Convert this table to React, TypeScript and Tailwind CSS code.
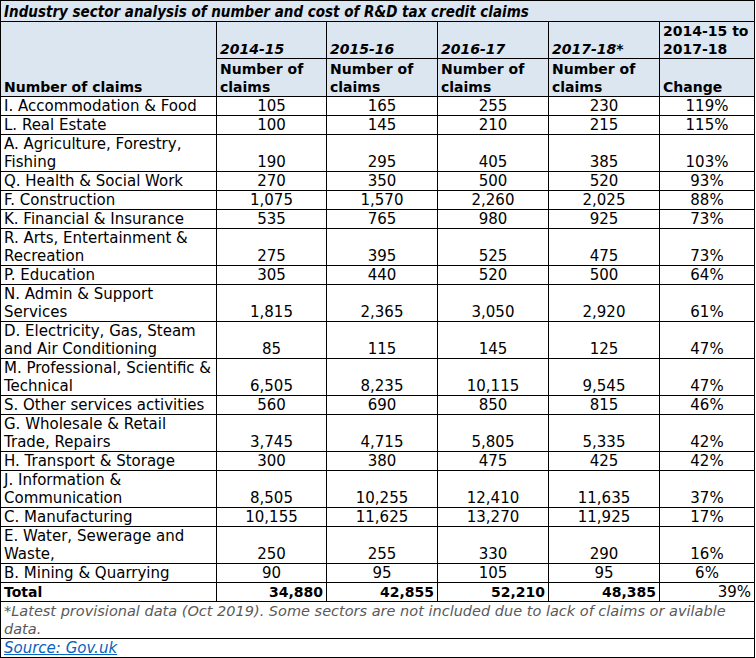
import React from "react";

type Row = {
  label: string;
  values: [string, string, string, string];
  change: string;
};

const rows: Row[] = [
  { label: "I. Accommodation & Food", values: ["105", "165", "255", "230"], change: "119%" },
  { label: "L. Real Estate", values: ["100", "145", "210", "215"], change: "115%" },
  { label: "A. Agriculture, Forestry,\nFishing", values: ["190", "295", "405", "385"], change: "103%" },
  { label: "Q. Health & Social Work", values: ["270", "350", "500", "520"], change: "93%" },
  { label: "F. Construction", values: ["1,075", "1,570", "2,260", "2,025"], change: "88%" },
  { label: "K. Financial & Insurance", values: ["535", "765", "980", "925"], change: "73%" },
  { label: "R. Arts, Entertainment &\nRecreation", values: ["275", "395", "525", "475"], change: "73%" },
  { label: "P. Education", values: ["305", "440", "520", "500"], change: "64%" },
  { label: "N. Admin & Support\nServices", values: ["1,815", "2,365", "3,050", "2,920"], change: "61%" },
  { label: "D. Electricity, Gas, Steam\nand Air Conditioning", values: ["85", "115", "145", "125"], change: "47%" },
  { label: "M. Professional, Scientific &\nTechnical", values: ["6,505", "8,235", "10,115", "9,545"], change: "47%" },
  { label: "S. Other services activities", values: ["560", "690", "850", "815"], change: "46%" },
  { label: "G. Wholesale & Retail\nTrade, Repairs", values: ["3,745", "4,715", "5,805", "5,335"], change: "42%" },
  { label: "H. Transport & Storage", values: ["300", "380", "475", "425"], change: "42%" },
  { label: "J. Information &\nCommunication", values: ["8,505", "10,255", "12,410", "11,635"], change: "37%" },
  { label: "C. Manufacturing", values: ["10,155", "11,625", "13,270", "11,925"], change: "17%" },
  { label: "E. Water, Sewerage and\nWaste,", values: ["250", "255", "330", "290"], change: "16%" },
  { label: "B. Mining & Quarrying", values: ["90", "95", "105", "95"], change: "6%" },
];

const years = ["2014-15", "2015-16", "2016-17", "2017-18*"];
const totals = ["34,880", "42,855", "52,210", "48,385"];
const cell = "border border-black px-[3px] align-bottom leading-[18px] whitespace-pre-line";

export default function App() {
  return (
    <div className="bg-white w-[756px] h-[658px] text-black text-[15px] font-['DejaVu_Sans',sans-serif]">
      <table className="table-fixed border-collapse w-[754px]">
        <colgroup>
          <col className="w-[216px]" />
          <col className="w-[110px]" />
          <col className="w-[111px]" />
          <col className="w-[111px]" />
          <col className="w-[111px]" />
          <col className="w-[95px]" />
        </colgroup>
        <thead className="bg-[#dce6f1] font-bold text-[14px]">
          <tr className="h-[21px]">
            <th colSpan={6} className={`${cell} text-left italic text-[15px] font-['DejaVu_Sans_Condensed',sans-serif]`}>
              Industry sector analysis of number and cost of R&amp;D tax credit claims
            </th>
          </tr>
          <tr className="h-[37px]">
            <th rowSpan={2} className={`${cell} text-left`}>
              Number of claims
            </th>
            {years.map((y) => (
              <th key={y} className={`${cell} text-left italic`}>
                {y}
              </th>
            ))}
            <th className={`${cell} text-left`}>{"2014-15 to\n2017-18"}</th>
          </tr>
          <tr className="h-[38px]">
            {years.map((y) => (
              <th key={y} className={`${cell} text-left`}>
                {"Number of\nclaims"}
              </th>
            ))}
            <th className={`${cell} text-left`}>Change</th>
          </tr>
        </thead>
        <tbody>
          {rows.map((r) => (
            <tr key={r.label} className={r.label.includes("\n") ? "h-[37px]" : "h-[19px]"}>
              <td className={cell}>{r.label}</td>
              {r.values.map((v, i) => (
                <td key={i} className={`${cell} text-center`}>
                  {v}
                </td>
              ))}
              <td className={`${cell} text-center`}>{r.change}</td>
            </tr>
          ))}
          <tr className="h-[19px]">
            <td className={`${cell} font-bold text-[14px]`}>Total</td>
            {totals.map((v) => (
              <td key={v} className={`${cell} text-right font-bold text-[14px]`}>
                {v}
              </td>
            ))}
            <td className={`${cell} text-right`}>39%</td>
          </tr>
          <tr className="h-[37px]">
            <td colSpan={6} className={`${cell} italic text-[14.5px] text-[#595959] align-top`}>
              {"*Latest provisional data (Oct 2019). Some sectors are not included due to lack of claims or avilable\ndata."}
            </td>
          </tr>
          <tr className="h-[18px]">
            <td colSpan={6} className={`${cell} italic`}>
              <a href="#" className="text-[#0563c1] underline">
                Source: Gov.uk
              </a>
            </td>
          </tr>
        </tbody>
      </table>
    </div>
  );
}
